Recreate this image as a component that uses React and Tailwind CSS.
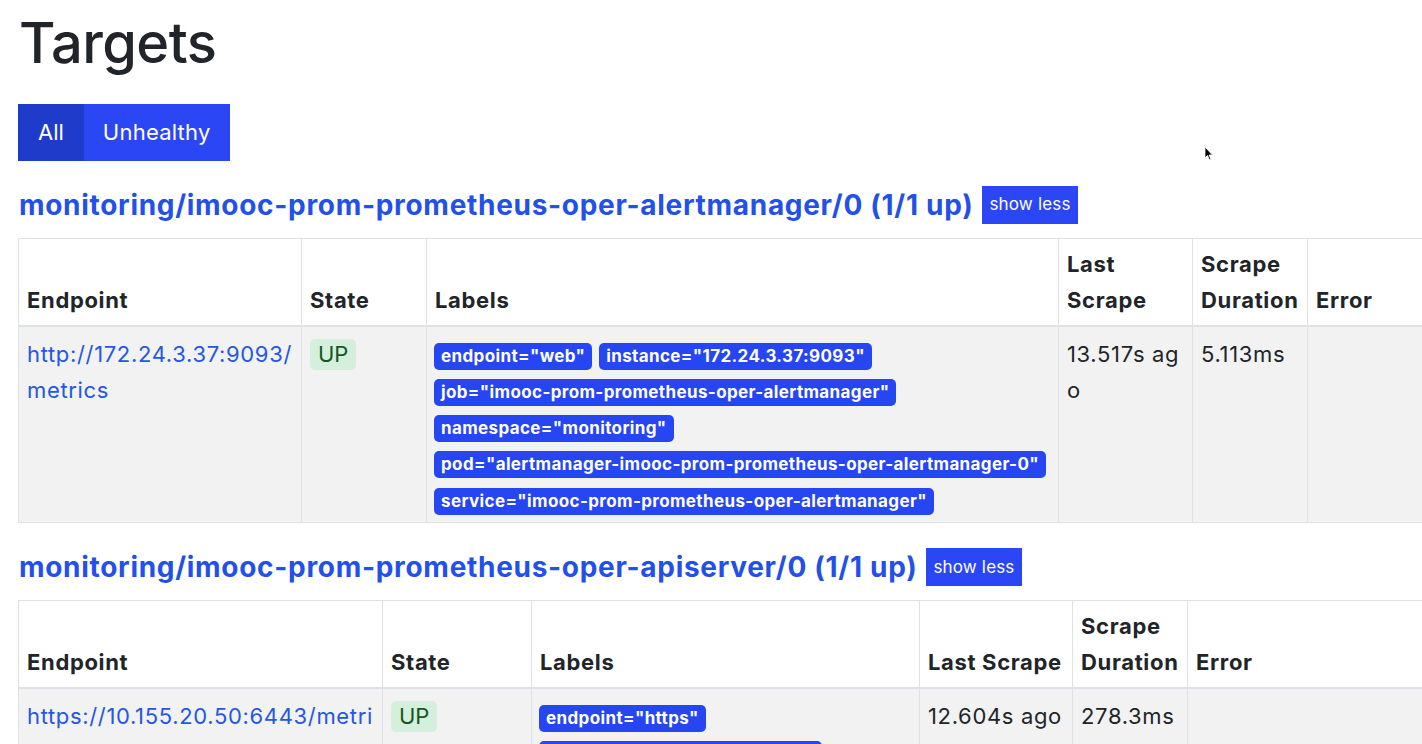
import React from "react";

const font = { fontFamily: "Inter, 'Liberation Sans', sans-serif" };

const groups = [
  {
    name: "monitoring/imooc-prom-prometheus-oper-alertmanager/0 (1/1 up)",
    cols: ["w-[283px]", "w-[125px]", "w-[632px]", "w-[134px]", "w-[115px]", ""],
    heads: ["Endpoint", "State", "Labels", "Last Scrape", "Scrape Duration", "Error"],
    endpoint: "http://172.24.3.37:9093/metrics",
    labels: [
      'endpoint="web"',
      'instance="172.24.3.37:9093"',
      'job="imooc-prom-prometheus-oper-alertmanager"',
      'namespace="monitoring"',
      'pod="alertmanager-imooc-prom-prometheus-oper-alertmanager-0"',
      'service="imooc-prom-prometheus-oper-alertmanager"',
    ],
    last: "13.517s ago",
    duration: "5.113ms",
  },
  {
    name: "monitoring/imooc-prom-prometheus-oper-apiserver/0 (1/1 up)",
    cols: ["w-[364px]", "w-[149px]", "w-[388px]", "w-[153px]", "w-[115px]", ""],
    heads: ["Endpoint", "State", "Labels", "Last Scrape", "Scrape Duration", "Error"],
    endpoint: "https://10.155.20.50:6443/metrics",
    labels: [
      'endpoint="https"',
      'instance="10.155.20.50:6443"',
      'job="apiserver"',
      'namespace="default"',
      'service="kubernetes"',
    ],
    last: "12.604s ago",
    duration: "278.3ms",
  },
];

const TargetTable = ({ group }) => (
  <table className="table-fixed border-collapse w-[1412px] text-[22px] tracking-[0.03em] text-[#212529]">
    <colgroup>
      {group.cols.map((c, i) => (
        <col key={i} className={c} />
      ))}
    </colgroup>
    <thead>
      <tr>
        {group.heads.map((h) => (
          <th
            key={h}
            className="border border-[#dee2e6] border-b-2 px-[8px] py-[7px] text-left align-bottom font-bold leading-[36px]"
          >
            {h}
          </th>
        ))}
      </tr>
    </thead>
    <tbody>
      <tr className="bg-[#f2f2f2]">
        <td className="border border-[#dee2e6] px-[8px] pt-[9px] pb-[5px] align-top leading-[36px] break-all">
          <a className="text-[#2457e3]" href="#">
            {group.endpoint}
          </a>
        </td>
        <td className="border border-[#dee2e6] px-[8px] pt-[9px] pb-[5px] align-top leading-[36px]">
          <span className="inline-block bg-[#d4f0dc] text-[#155724] rounded-[5px] px-[8px] leading-[31px] tracking-normal">
            UP
          </span>
        </td>
        <td className="border border-[#dee2e6] px-[7px] pt-[9px] pb-[5px] align-top leading-[36.3px] tracking-normal">
          {group.labels.map((l) => (
            <span
              key={l}
              className="inline-block whitespace-nowrap bg-[#2646f2] text-white font-bold text-[17px] leading-[27px] px-[7px] rounded-[5px] mr-[7px] align-middle tracking-[0.022em]"
            >
              {l}
            </span>
          ))}
        </td>
        <td className="border border-[#dee2e6] px-[8px] pt-[9px] pb-[5px] align-top leading-[36px] break-all">
          {group.last}
        </td>
        <td className="border border-[#dee2e6] px-[8px] pt-[9px] pb-[5px] align-top leading-[36px]">
          {group.duration}
        </td>
        <td className="border border-[#dee2e6] px-[8px] pt-[9px] pb-[5px] align-top leading-[36px]"></td>
      </tr>
    </tbody>
  </table>
);

export default function App() {
  return (
    <div className="relative h-[744px] w-[1422px] overflow-hidden bg-white" style={font}>
      <div className="pl-[18px]">
        <h1 className="text-[56px] font-medium leading-none text-[#212529] pt-[15px] pl-[1px] tracking-[-0.01em]">
          Targets
        </h1>
        <div className="flex mt-[33px] text-[22px] text-white">
          <button className="h-[57px] px-[19px] bg-[#1f3bc9] border border-[#1f3bc9]">All</button>
          <button className="h-[57px] px-[18px] bg-[#2b46f5] border border-[#2b46f5] tracking-[0.01em]">
            Unhealthy
          </button>
        </div>
        {groups.map((g, i) => (
          <div key={g.name} className={i === 0 ? "mt-[24px]" : "mt-[24px]"}>
            <div className="flex items-center gap-[9px] pl-[1px] mb-[13px]">
              <h2 className="text-[28px] font-bold leading-[40px] text-[#2350e8] tracking-[0.025em]">
                {g.name}
              </h2>
              <button className="h-[38px] px-[7px] bg-[#2b46f5] text-white text-[17px] tracking-[0.01em]">
                show less
              </button>
            </div>
            <TargetTable group={g} />
          </div>
        ))}
      </div>
      <svg
        className="absolute left-[1204px] top-[146px]"
        width="10"
        height="15"
        viewBox="0 0 10 15"
      >
        <path d="M1 1 L1 12 L3.5 9.5 L5.5 14 L7 13.3 L5 9 L8.5 9 Z" fill="#000" stroke="#fff" strokeWidth="0.8" />
      </svg>
    </div>
  );
}
